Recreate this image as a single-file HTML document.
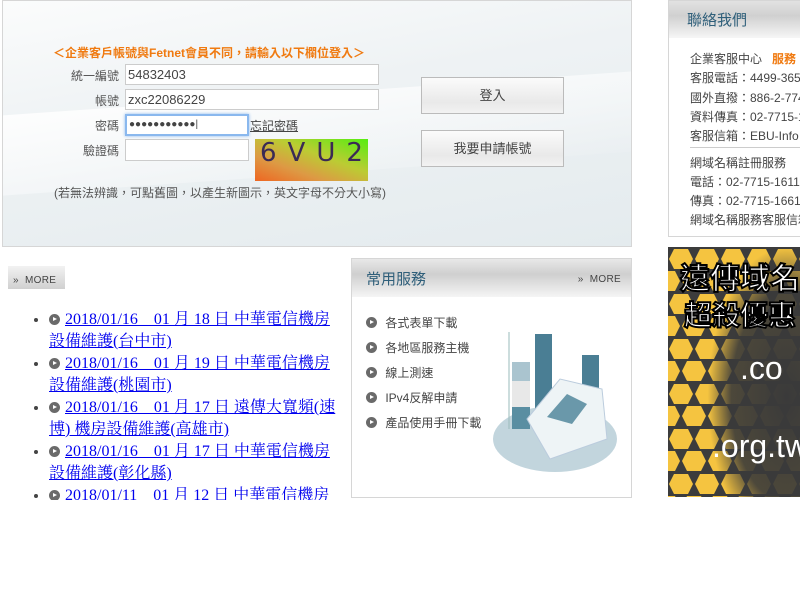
<!DOCTYPE html>
<html><head><meta charset="utf-8"><style>
*{margin:0;padding:0;box-sizing:border-box}
body{width:800px;height:600px;overflow:hidden;background:#fff;font-family:"Liberation Sans","Noto Sans CJK TC",sans-serif;position:relative;font-size:12px;color:#444}
.abs{position:absolute}
#login{left:2px;top:0;width:630px;height:247px;border:1px solid #d6d6d6;background:linear-gradient(170deg,#fbfcfc 0%,#eef2f4 40%,#e4ebee 100%);overflow:hidden}
#login:before{content:"";position:absolute;left:-50px;top:90px;width:800px;height:80px;background:linear-gradient(175deg,rgba(255,255,255,.9),rgba(255,255,255,0));transform:rotate(-4deg)}
.lbl{position:absolute;width:70px;text-align:right;color:#555;font-size:12px}
.inp{position:absolute;background:#fff;border:1px solid #ccc;font-size:13px;color:#444;padding-left:2px;line-height:19px}
.btn{position:absolute;width:143px;height:37px;border:1px solid #bbb;background:linear-gradient(#fbfbfb,#e9e9e9 70%,#f2f2f2);text-align:center;line-height:35px;font-size:13px;color:#444}
#contact{left:668px;top:0;width:140px;height:237px;border:1px solid #d6d6d6}
#contact .hd{height:37px;background:linear-gradient(#e2e2e2,#d0d0d0 40%,#f6f6f6);color:#2f5f7a;font-size:15px;padding:8px 0 0 18px}
.cl{position:absolute;left:21px;white-space:nowrap;font-size:12px;color:#444}
#svc{left:351px;top:258px;width:281px;height:240px;border:1px solid #d6d6d6}
#svc .hd{height:38px;background:linear-gradient(#e8e8e8,#cfcfcf 40%,#f5f5f5);color:#2f5f7a;font-size:15px;padding:9px 0 0 14px;position:relative}
.more{font-size:10px;color:#444;letter-spacing:.3px}
.si{position:absolute;left:14px;font-size:12px;color:#444;white-space:nowrap}
.ic{display:inline-block;width:11px;height:11px;border-radius:50%;background:#6a6a6a;position:relative;margin-right:5px;vertical-align:-1px}
.ic:after{content:"";position:absolute;left:4px;top:3px;border-left:4px solid #fff;border-top:2.5px solid transparent;border-bottom:2.5px solid transparent}
#news{left:0;top:300px;width:345px;height:200px;overflow:hidden}
#news ul{padding-left:49px;width:339px;font-family:"Liberation Serif","Noto Serif CJK SC",serif;font-size:16px;line-height:22px;margin-top:9px;list-style:disc outside}
#news a{color:#00e;text-decoration:underline}
#ban{left:668px;top:247px;width:132px;height:250px;background:#3a3a3a;overflow:hidden}
</style></head><body>
<div id="login" class="abs">
<div class="abs" style="left:50px;top:43px;color:#f07a10;font-weight:bold;font-size:12px;white-space:nowrap">＜企業客戶帳號與Fetnet會員不同，請輸入以下欄位登入＞</div>
<div class="lbl" style="left:46px;top:66px">統一編號</div>
<div class="lbl" style="left:46px;top:91px">帳號</div>
<div class="lbl" style="left:46px;top:116px">密碼</div>
<div class="lbl" style="left:46px;top:141px">驗證碼</div>
<div class="inp" style="left:122px;top:63px;width:254px;height:21px">54832403</div>
<div class="inp" style="left:122px;top:88px;width:254px;height:21px">zxc22086229</div>
<div class="inp" style="left:122px;top:113px;width:124px;height:22px;border:2px solid #8ab8ee;box-shadow:0 0 3px #8ab8ee;font-size:10px;line-height:17px">●●●●●●●●●●●|</div>
<div class="abs" style="left:247px;top:116px;text-decoration:underline;color:#444">忘記密碼</div>
<div class="inp" style="left:122px;top:138px;width:124px;height:22px"></div>
<div class="abs" style="left:252px;top:138px;width:113px;height:42px;background:linear-gradient(to right top,#e62,#d94 30%,#bc3 60%,#5e1);font:26px 'DejaVu Sans',sans-serif;letter-spacing:11px;padding-left:5px;line-height:28px;color:#3a2a55">6VU2</div>
<div class="abs" style="left:51px;top:183px;white-space:nowrap;color:#555">(若無法辨識，可點舊圖，以產生新圖示，英文字母不分大小寫)</div>
<div class="btn" style="left:418px;top:76px">登入</div>
<div class="btn" style="left:418px;top:129px">我要申請帳號</div>
</div>
<div id="contact" class="abs"><div class="hd">聯絡我們</div>
<div class="cl" style="top:49px">企業客服中心&nbsp;&nbsp;&nbsp;<span style="color:#f07a10;font-weight:bold">服務</span></div>
<div class="cl" style="top:68px">客服電話：4499-365</div>
<div class="cl" style="top:88px">國外直撥：886-2-774</div>
<div class="cl" style="top:107px">資料傳真：02-7715-1</div>
<div class="cl" style="top:126px">客服信箱：EBU-Info</div>
<div class="abs" style="left:21px;top:146px;width:120px;border-top:1px solid #ccc"></div>
<div class="cl" style="top:153px">網域名稱註冊服務</div>
<div class="cl" style="top:172px">電話：02-7715-1611</div>
<div class="cl" style="top:191px">傳真：02-7715-1661</div>
<div class="cl" style="top:210px">網域名稱服務客服信箱</div>
</div>
<div class="abs" style="left:8px;top:266px;width:57px;height:23px;background:linear-gradient(#f2f2f2,#d0d0d0);padding:6px 0 0 5px" ><span class="more">»&nbsp;&nbsp;MORE</span></div>
<div id="news" class="abs"><ul>
<li><span class="ic"></span><a>2018/01/16　01 月 18 日 中華電信機房設備維護(台中市)</a></li>
<li><span class="ic"></span><a>2018/01/16　01 月 19 日 中華電信機房設備維護(桃園市)</a></li>
<li><span class="ic"></span><a>2018/01/16　01 月 17 日 遠傳大寬頻(速博) 機房設備維護(高雄市)</a></li>
<li><span class="ic"></span><a>2018/01/16　01 月 17 日 中華電信機房設備維護(彰化縣)</a></li>
<li><span class="ic"></span><a>2018/01/11　01 月 12 日 中華電信機房設備維護</a></li>
</ul></div>
<div id="svc" class="abs"><div class="hd">常用服務<span class="more abs" style="right:10px;top:15px">»&nbsp;&nbsp;MORE</span></div>
<div class="si" style="top:55px"><span class="ic"></span> 各式表單下載</div>
<div class="si" style="top:80px"><span class="ic"></span> 各地區服務主機</div>
<div class="si" style="top:105px"><span class="ic"></span> 線上測速</div>
<div class="si" style="top:130px"><span class="ic"></span> IPv4反解申請</div>
<div class="si" style="top:155px"><span class="ic"></span> 產品使用手冊下載</div>
<svg class="abs" style="left:140px;top:70px" width="140" height="145">
<ellipse cx="63" cy="110" rx="62" ry="33" fill="#c2d5dd"/>
<line x1="17" y1="3" x2="17" y2="100" stroke="#9bb" stroke-width="1"/>
<rect x="20" y="33" width="18" height="67" fill="#5a8ea2"/><rect x="20" y="52" width="18" height="26" fill="#e8e8e8"/><rect x="20" y="33" width="18" height="19" fill="#aac4cf"/>
<rect x="43" y="5" width="17" height="75" fill="#4a7e94"/>
<rect x="90" y="26" width="17" height="50" fill="#4a7e94"/>
<polygon points="35,90 68,50 110,60 115,110 58,130" fill="#eef4f6" stroke="#bcd" />
<polygon points="55,88 75,65 95,75 80,95" fill="#6a98aa"/>
</svg>
</div>
<div id="ban" class="abs">
<svg width="132" height="250"><defs><pattern id="h" width="26" height="45" patternUnits="userSpaceOnUse"><rect width="26" height="45" fill="#3c3c3c"/><polygon points="6,2 20,2 25,12 20,22 6,22 1,12" fill="#f5c440"/><polygon points="19,24 33,24 38,34 33,44 19,44 14,34" fill="#f5c440"/><polygon points="-7,24 7,24 12,34 7,44 -7,44 -12,34" fill="#f5c440"/></pattern>
<radialGradient id="d" cx="0.9" cy="0.6" r="0.6"><stop offset="0" stop-color="#3a3a3a" stop-opacity="1"/><stop offset="0.7" stop-color="#3a3a3a" stop-opacity=".9"/><stop offset="1" stop-color="#3a3a3a" stop-opacity="0"/></radialGradient></defs>
<rect width="132" height="250" fill="url(#h)"/>
<rect width="132" height="250" fill="url(#d)"/>
<text x="12" y="42" font-size="30" font-weight="bold" fill="#fff" stroke="#000" stroke-width="2" font-family="Noto Sans CJK TC,sans-serif">遠傳域名</text>
<text x="16" y="78" font-size="28" font-weight="bold" fill="#fff" stroke="#000" stroke-width="2" font-family="Noto Sans CJK TC,sans-serif">超殺優惠</text>
<text x="72" y="132" font-size="32" fill="#fff" font-family="Liberation Sans,sans-serif">.co</text>
<text x="44" y="210" font-size="32" fill="#fff" font-family="Liberation Sans,sans-serif">.org.tw</text>
</svg></div>
</body></html>
